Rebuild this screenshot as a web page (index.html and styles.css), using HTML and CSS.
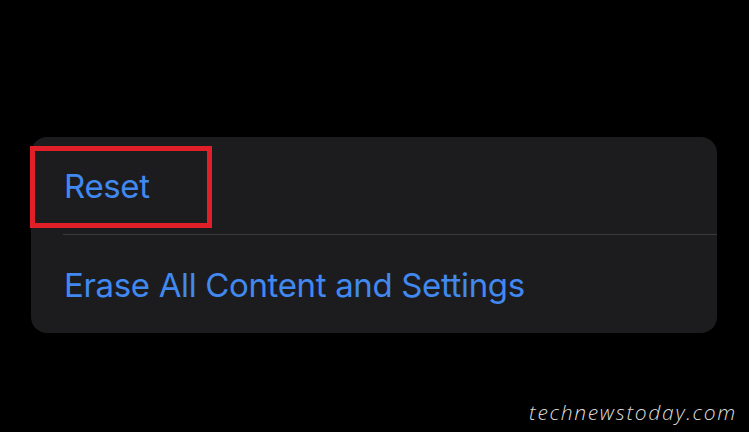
FILE: index.html
```html
<!DOCTYPE html>
<html lang="en">
<head>
<meta charset="utf-8">
<title>Reset</title>
<link rel="stylesheet" href="styles.css">
</head>
<body>
<div class="page">
  <div class="card">
    <div class="row row-first">
      <span class="label">Reset</span>
      <div class="highlight"></div>
    </div>
    <div class="divider"></div>
    <div class="row row-last">
      <span class="label">Erase All Content and Settings</span>
    </div>
  </div>
  <div class="watermark">technewstoday.com</div>
</div>
</body>
</html>
```

FILE: styles.css
```css
html, body {
  margin: 0;
  padding: 0;
  background: #000;
}
.page {
  width: 749px;
  height: 432px;
  padding-top: 137px;
  box-sizing: border-box;
  display: flex;
  flex-direction: column;
}
.card {
  margin-left: 31px;
  width: 686px;
  height: 196px;
  background: #1c1c1e;
  border-radius: 16px;
  display: flex;
  flex-direction: column;
  position: relative;
}
.row {
  position: relative;
  display: flex;
  align-items: center;
  padding-left: 33px;
}
.row-first {
  height: 97px;
}
.row-last {
  height: 98px;
}
.label {
  font-family: Inter, "Liberation Sans", sans-serif;
  font-size: 33px;
  letter-spacing: -0.35px;
  color: #4189f0;
  line-height: 1;
  position: relative;
  top: 1px;
}
.divider {
  height: 1px;
  margin-left: 32px;
  background: #3a3a3c;
}
.highlight {
  position: absolute;
  left: -1px;
  top: 9px;
  width: 182px;
  height: 82px;
  border: 5px solid #e11f28;
  box-sizing: border-box;
}
.watermark {
  margin-top: 67px;
  align-self: flex-end;
  margin-right: 12px;
  font-family: "Open Sans", sans-serif;
  font-style: italic;
  font-weight: 300;
  font-size: 21px;
  letter-spacing: 1.7px;
  color: #dcdcdc;
  line-height: 24px;
}
```
